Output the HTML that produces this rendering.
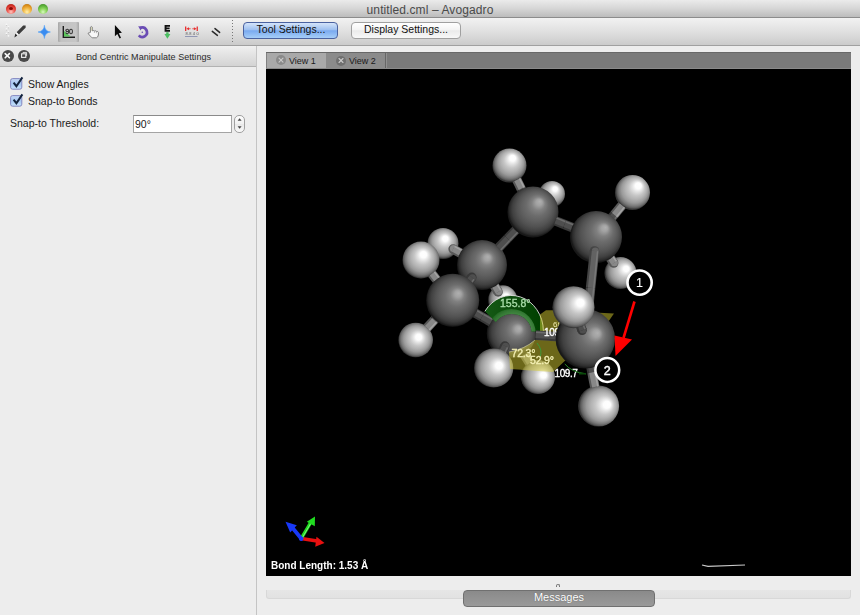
<!DOCTYPE html>
<html><head><meta charset="utf-8">
<style>
*{margin:0;padding:0;box-sizing:border-box}
html,body{width:860px;height:615px;overflow:hidden;background:#ededed;font-family:"Liberation Sans",sans-serif;position:relative}
.a{position:absolute}
#title{left:0;top:0;width:860px;height:17px;background:linear-gradient(#ebebeb,#d6d6d6 50%,#bcbcbc)}
#titleline{left:0;top:17px;width:860px;height:1px;background:#8c8c8c}
#tb{left:0;top:18px;width:860px;height:27px;background:linear-gradient(#f2f2f2,#dedede 55%,#cbcbcb)}
#tbline{left:0;top:45px;width:860px;height:1px;background:#a0a0a0}
.tl{width:10px;height:10px;border-radius:50%;top:4px}
#ttext{left:0;top:3px;width:860px;text-align:center;font-size:12px;color:#4a4a4a;letter-spacing:0.1px;padding-left:0}
#dockh{left:0;top:46px;width:256px;height:20px;background:linear-gradient(#f0f0f0,#d3d3d3)}
#dockhline{left:0;top:66px;width:256px;height:1px;background:#b2b2b2}
#split{left:256px;top:46px;width:1px;height:569px;background:#c4c4c4}
#docktitle{left:0;top:51.5px;width:287px;text-align:center;font-size:9px;color:#2a2a2a;letter-spacing:0.05px}
.lbl{font-size:10.5px;color:#1a1a1a;white-space:nowrap}
#tabbar{left:266px;top:52px;width:585px;height:17px;background:#7a7a7a;border-top:1px solid #686868;border-bottom:1px solid #8a8a8a}
#gl{left:266px;top:69px;width:585px;height:507px;background:#000;overflow:hidden}
.btn{height:17px;border-radius:4px;font-size:10.5px;text-align:center;line-height:13px;color:#111;white-space:nowrap}
.tab{top:52px;height:16px;font-size:9px;color:#1a1a1a;white-space:nowrap}
.dk{width:12px;height:12px;border-radius:50%;background:#4a4a4a;top:50px}
</style></head><body>
<div class="a" id="title"></div>
<div class="a" id="titleline"></div>
<div class="a tl" style="left:6px;background:radial-gradient(circle at 50% 80%,#ffc8c0 0,#f06058 35%,#d8342a 65%,#9a1c14 100%)"></div>
<div class="a tl" style="left:22px;background:radial-gradient(circle at 50% 80%,#fff0b0 0,#f4c050 35%,#e09420 65%,#a86a10 100%)"></div>
<div class="a tl" style="left:38px;background:radial-gradient(circle at 50% 80%,#d8f8c0 0,#90d860 35%,#5cb23a 65%,#3a7a22 100%)"></div>
<div class="a" style="left:9px;top:7px;width:4px;height:3px;border-radius:50%;background:#8a0a06"></div>
<div class="a" id="ttext">untitled.cml – Avogadro</div>
<div class="a" id="tb"></div>
<div class="a" id="tbline"></div>
<div class="a" style="left:58px;top:22px;width:21px;height:20px;background:linear-gradient(90deg,#a6a6a6,#c2c2c2 14%,#c6c6c6 86%,#a6a6a6);border-radius:1px"></div>
<svg class="a" style="left:0;top:18px;will-change:transform" width="240" height="27" viewBox="0 18 240 27">
<g fill="#fafafa" opacity="0.9"><circle cx="6.5" cy="24.5" r="0.9"/><circle cx="8.5" cy="26.8" r="0.9"/><circle cx="6.5" cy="29" r="0.9"/><circle cx="8.5" cy="31.3" r="0.9"/><circle cx="6.5" cy="33.5" r="0.9"/><circle cx="8.5" cy="35.8" r="0.9"/></g>
<g fill="#b8b8b8" opacity="0.7"><circle cx="6.5" cy="25.5" r="0.6"/><circle cx="8.5" cy="27.8" r="0.6"/><circle cx="6.5" cy="30" r="0.6"/><circle cx="8.5" cy="32.3" r="0.6"/><circle cx="6.5" cy="34.5" r="0.6"/></g>
<path d="M25.6,25.6 L23.2,25.4 L16.6,32.2 L18.8,34.4 L25.6,27.8 Z" fill="#3c3c3c"/>
<path d="M16.6,32.2 L18.8,34.4 L17.4,35.6 L15.4,33.6 Z" fill="#f4f4f4"/>
<path d="M15.4,33.6 L17.4,35.6 L14.4,37.6 Z" fill="#2a2a2a"/>
<path d="M44.4,25.3 Q44.9,31.4 50.4,32 Q44.9,32.6 44.4,38.5 Q43.9,32.6 38,32 Q43.9,31.4 44.4,25.3 Z" fill="#3a8cf0" stroke="#5aa6f6" stroke-width="0.6"/>
<path d="M63.3,26 L63.3,37.2 L75,37.2" fill="none" stroke="#1e1e1e" stroke-width="1.4"/>
<path d="M64,31 L64,36.5 L70.8,36.5 Z" fill="#5cc65c"/>
<text x="65.3" y="33.9" font-size="7.2" fill="#2a2a2a" stroke="#2a2a2a" stroke-width="0.3" font-family="Liberation Sans" letter-spacing="-0.4">90</text>
<path d="M90.4,32.4 L90.4,27.2 Q91.3,25.8 92.3,27.2 L92.3,30.8 Q93.4,30.1 94.4,31 Q95.5,30.4 96.4,31.4 Q97.7,31 98.4,32.3 L98.4,35 Q97.9,37.5 96.4,37.8 L92.6,37.8 Q91.4,37.6 90.6,36.4 L88.3,33.8 Q87.9,32.6 89.2,32.8 Z" fill="#f8f8f8" stroke="#707070" stroke-width="0.85"/><path d="M94.4,31.2 V33 M96.4,31.6 V33.2" stroke="#909090" stroke-width="0.6"/><path d="M91.6,27 L91.6,30.8" stroke="#c8c890" stroke-width="0.6"/>
<path d="M114.9,25.1 L114.9,36.2 L117.3,33.9 L119.6,38.5 L121,37.8 L118.8,33.2 L121.9,32.7 Z" fill="#0a0a0a"/>
<path d="M140.6,27.8 A4.7,4.7 0 1 1 138.8,35.4" fill="none" stroke="#6a4cb4" stroke-width="2.7"/>
<path d="M138.2,26.2 L142.6,26.4 L140.6,30.4 Z" fill="#6a4cb4"/>
<circle cx="142.3" cy="32.3" r="0.8" fill="#6a4cb4"/>
<path d="M164.6,25 H170 V26.7 H166.5 V27.6 H169.6 V29.2 H166.5 V30.1 H170 V31.8 H164.6 Z" fill="#111"/>
<path d="M166.2,32.2 H168.6 V34 H170.4 L167.4,38.7 L164.4,34 H166.2 Z" fill="#4cbe62"/>
<g fill="#e83030"><rect x="185" y="26.5" width="1.3" height="4.5"/><rect x="196.6" y="26.5" width="1.3" height="4.5"/><path d="M186.3,28.8 L189,27.3 L189,30.3 Z"/><path d="M196.6,28.8 L193.9,27.3 L193.9,30.3 Z"/><rect x="189" y="28.4" width="1.6" height="0.8"/><rect x="192.3" y="28.4" width="1.6" height="0.8"/></g>
<text x="185.4" y="35.2" font-size="4" fill="#555" font-family="Liberation Sans" letter-spacing="0.2">8.8 4 0</text>
<rect x="185" y="36" width="12.5" height="0.9" fill="#8a90b0"/>
<g stroke="#2a2a2a" stroke-width="1.5" stroke-linecap="round"><line x1="212.3" y1="31.4" x2="217.4" y2="35.4"/><line x1="215" y1="28.6" x2="219.6" y2="32.4"/></g>
<g fill="#777"><rect x="232" y="20" width="1" height="1"/><rect x="232" y="23" width="1" height="1"/><rect x="232" y="26" width="1" height="1"/><rect x="232" y="29" width="1" height="1"/><rect x="232" y="32" width="1" height="1"/><rect x="232" y="35" width="1" height="1"/><rect x="232" y="38" width="1" height="1"/><rect x="232" y="41" width="1" height="1"/></g>
</svg>

<div class="a btn" style="left:243px;top:22px;width:95px;border:1px solid #4a62a0;background:linear-gradient(#d4e4fa,#9ec0f0 45%,#7aaaf0 52%,#a6cef8);padding-left:1px">Tool Settings...</div>
<div class="a btn" style="left:351px;top:22px;width:110px;border:1px solid #a0a0a0;background:linear-gradient(#ffffff,#f4f4f4 45%,#ebebeb 52%,#f8f8f8)">Display Settings...</div>

<div class="a" id="dockh"></div>
<div class="a" id="dockhline"></div>
<div class="a" id="split"></div>
<div class="a dk" style="left:1.5px"></div>
<div class="a dk" style="left:18px"></div>
<svg class="a" style="left:0;top:46px" width="40" height="20" viewBox="0 46 40 20">
<g stroke="#fafafa" stroke-width="1.6" stroke-linecap="round"><line x1="5.2" y1="53.6" x2="9.4" y2="57.8"/><line x1="9.4" y1="53.6" x2="5.2" y2="57.8"/></g>
<rect x="21.6" y="53.8" width="4.2" height="3.6" fill="none" stroke="#f0f0f0" stroke-width="1.1"/><path d="M23,53.4 L23,52.4 L26.6,52.4 L26.6,55.6 L26,55.6" fill="none" stroke="#f0f0f0" stroke-width="0.9"/>
</svg>
<div class="a" id="docktitle">Bond Centric Manipulate Settings</div>

<svg class="a" style="left:8px;top:75px" width="18" height="36" viewBox="8 75 18 36">
<defs><linearGradient id="cbg" x1="0" y1="0" x2="0" y2="1"><stop offset="0" stop-color="#c4d6f4"/><stop offset="0.5" stop-color="#a6c8f2"/><stop offset="1" stop-color="#c8e4fc"/></linearGradient></defs>
<rect x="10.6" y="78.6" width="11.2" height="10.6" rx="2" fill="url(#cbg)" stroke="#8488c0" stroke-width="1"/>
<rect x="10.6" y="95.6" width="11.2" height="10.6" rx="2" fill="url(#cbg)" stroke="#8488c0" stroke-width="1"/>
<path d="M13.6,82.6 L16.4,86.2 L22.4,77.4" fill="none" stroke="#14243e" stroke-width="2"/>
<path d="M13.6,99.6 L16.4,103.2 L22.4,94.4" fill="none" stroke="#14243e" stroke-width="2"/>
</svg>
<div class="a lbl" style="left:28px;top:78px">Show Angles</div>
<div class="a lbl" style="left:28px;top:94.5px">Snap-to Bonds</div>
<div class="a lbl" style="left:10px;top:117px">Snap-to Threshold:</div>
<div class="a" style="left:133px;top:115px;width:99px;height:18px;background:#fff;border:1px solid #a4a4a4;border-top-color:#8a8a8a"></div>
<div class="a lbl" style="left:135px;top:118px">90°</div>
<div class="a" style="left:234px;top:115px;width:11px;height:18px;border:1px solid #a0a0a0;border-radius:5px;background:linear-gradient(#fdfdfd,#f0f0f0 50%,#e8e8e8 51%,#fafafa)"></div>
<svg class="a" style="left:234px;top:115px" width="11" height="18" viewBox="234 115 11 18">
<path d="M237.6,120.8 L239.6,118.2 L241.6,120.8 Z" fill="#454545"/><path d="M237.6,126.2 L239.6,128.8 L241.6,126.2 Z" fill="#454545"/>
</svg>

<div class="a" id="tabbar"></div>
<div class="a" style="left:266px;top:53px;width:60px;height:15px;background:#a9a9a9;border-left:1px solid #808080"></div>
<div class="a" style="left:326px;top:53px;width:60px;height:15px;background:#8b8b8b;border-right:1px solid #666"></div>
<div class="a" style="left:386px;top:53px;width:1px;height:15px;background:#909090"></div>
<div class="a" style="left:276px;top:55.2px;width:10px;height:10px;border-radius:50%;background:#8a8a8a"></div>
<div class="a" style="left:336px;top:55.5px;width:10px;height:10px;border-radius:50%;background:#707070"></div>
<svg class="a" style="left:266px;top:52px" width="120" height="16" viewBox="266 52 120 16">
<g stroke="#cacaca" stroke-width="1.1" stroke-linecap="round"><line x1="279" y1="58.2" x2="283" y2="62.2"/><line x1="283" y1="58.2" x2="279" y2="62.2"/><line x1="339" y1="58.5" x2="343" y2="62.5"/><line x1="343" y1="58.5" x2="339" y2="62.5"/></g>
</svg>
<div class="a tab" style="left:289px;top:56px">View 1</div>
<div class="a tab" style="left:349px;top:56px">View 2</div>
<div class="a" id="gl"></div>
<!--MOL-->
<svg class="a" style="left:266px;top:69px;will-change:transform" width="585" height="507" viewBox="266 69 585 507">
<defs><radialGradient id="gCt" gradientUnits="userSpaceOnUse" cx="534.0" cy="210.4" r="26.0" fx="539.9" fy="201.3"><stop offset="0" stop-color="#b0b0b0"/><stop offset="0.12" stop-color="#a2a2a2"/><stop offset="0.26" stop-color="#808080"/><stop offset="0.42" stop-color="#6c6c6c"/><stop offset="0.57" stop-color="#606060"/><stop offset="0.72" stop-color="#525252"/><stop offset="0.86" stop-color="#404040"/><stop offset="0.95" stop-color="#2c2c2c"/><stop offset="1" stop-color="#181818"/></radialGradient><radialGradient id="gCr" gradientUnits="userSpaceOnUse" cx="597.4" cy="235.5" r="26.5" fx="605.6" fy="227.3"><stop offset="0" stop-color="#b0b0b0"/><stop offset="0.12" stop-color="#a2a2a2"/><stop offset="0.26" stop-color="#808080"/><stop offset="0.42" stop-color="#6c6c6c"/><stop offset="0.57" stop-color="#606060"/><stop offset="0.72" stop-color="#525252"/><stop offset="0.86" stop-color="#404040"/><stop offset="0.95" stop-color="#2c2c2c"/><stop offset="1" stop-color="#181818"/></radialGradient><radialGradient id="gCm" gradientUnits="userSpaceOnUse" cx="482.9" cy="263.8" r="25.5" fx="488.0" fy="256.8"><stop offset="0" stop-color="#b0b0b0"/><stop offset="0.12" stop-color="#a2a2a2"/><stop offset="0.26" stop-color="#808080"/><stop offset="0.42" stop-color="#6c6c6c"/><stop offset="0.57" stop-color="#606060"/><stop offset="0.72" stop-color="#525252"/><stop offset="0.86" stop-color="#404040"/><stop offset="0.95" stop-color="#2c2c2c"/><stop offset="1" stop-color="#181818"/></radialGradient><radialGradient id="gCl" gradientUnits="userSpaceOnUse" cx="453.6" cy="299.2" r="27.0" fx="458.7" fy="293.2"><stop offset="0" stop-color="#b0b0b0"/><stop offset="0.12" stop-color="#a2a2a2"/><stop offset="0.26" stop-color="#808080"/><stop offset="0.42" stop-color="#6c6c6c"/><stop offset="0.57" stop-color="#606060"/><stop offset="0.72" stop-color="#525252"/><stop offset="0.86" stop-color="#404040"/><stop offset="0.95" stop-color="#2c2c2c"/><stop offset="1" stop-color="#181818"/></radialGradient><radialGradient id="gCc" gradientUnits="userSpaceOnUse" cx="512.5" cy="332.7" r="25.0" fx="519.2" fy="328.5"><stop offset="0" stop-color="#b0b0b0"/><stop offset="0.12" stop-color="#a2a2a2"/><stop offset="0.26" stop-color="#808080"/><stop offset="0.42" stop-color="#6c6c6c"/><stop offset="0.57" stop-color="#606060"/><stop offset="0.72" stop-color="#525252"/><stop offset="0.86" stop-color="#404040"/><stop offset="0.95" stop-color="#2c2c2c"/><stop offset="1" stop-color="#181818"/></radialGradient><radialGradient id="gCrl" gradientUnits="userSpaceOnUse" cx="587.2" cy="337.8" r="30.3" fx="597.8" fy="333.0"><stop offset="0" stop-color="#b0b0b0"/><stop offset="0.12" stop-color="#a2a2a2"/><stop offset="0.26" stop-color="#808080"/><stop offset="0.42" stop-color="#6c6c6c"/><stop offset="0.57" stop-color="#606060"/><stop offset="0.72" stop-color="#525252"/><stop offset="0.86" stop-color="#404040"/><stop offset="0.95" stop-color="#2c2c2c"/><stop offset="1" stop-color="#181818"/></radialGradient><radialGradient id="gHt" gradientUnits="userSpaceOnUse" cx="510.0" cy="164.2" r="17.3" fx="513.1" fy="156.9"><stop offset="0" stop-color="#ffffff"/><stop offset="0.17" stop-color="#fdfdfd"/><stop offset="0.3" stop-color="#e2e2e2"/><stop offset="0.45" stop-color="#c6c6c6"/><stop offset="0.6" stop-color="#b2b2b2"/><stop offset="0.75" stop-color="#9a9a9a"/><stop offset="0.87" stop-color="#7a7a7a"/><stop offset="0.95" stop-color="#5a5a5a"/><stop offset="1" stop-color="#363636"/></radialGradient><radialGradient id="gHbt" gradientUnits="userSpaceOnUse" cx="552.6" cy="193.1" r="13.3" fx="555.7" fy="188.1"><stop offset="0" stop-color="#ffffff"/><stop offset="0.17" stop-color="#fdfdfd"/><stop offset="0.3" stop-color="#e2e2e2"/><stop offset="0.45" stop-color="#c6c6c6"/><stop offset="0.6" stop-color="#b2b2b2"/><stop offset="0.75" stop-color="#9a9a9a"/><stop offset="0.87" stop-color="#7a7a7a"/><stop offset="0.95" stop-color="#5a5a5a"/><stop offset="1" stop-color="#363636"/></radialGradient><radialGradient id="gHtr" gradientUnits="userSpaceOnUse" cx="633.5" cy="191.3" r="17.9" fx="639.3" fy="184.6"><stop offset="0" stop-color="#ffffff"/><stop offset="0.17" stop-color="#fdfdfd"/><stop offset="0.3" stop-color="#e2e2e2"/><stop offset="0.45" stop-color="#c6c6c6"/><stop offset="0.6" stop-color="#b2b2b2"/><stop offset="0.75" stop-color="#9a9a9a"/><stop offset="0.87" stop-color="#7a7a7a"/><stop offset="0.95" stop-color="#5a5a5a"/><stop offset="1" stop-color="#363636"/></radialGradient><radialGradient id="gHrb" gradientUnits="userSpaceOnUse" cx="621.5" cy="272.3" r="16.3" fx="627.3" fy="268.1"><stop offset="0" stop-color="#ffffff"/><stop offset="0.17" stop-color="#fdfdfd"/><stop offset="0.3" stop-color="#e2e2e2"/><stop offset="0.45" stop-color="#c6c6c6"/><stop offset="0.6" stop-color="#b2b2b2"/><stop offset="0.75" stop-color="#9a9a9a"/><stop offset="0.87" stop-color="#7a7a7a"/><stop offset="0.95" stop-color="#5a5a5a"/><stop offset="1" stop-color="#363636"/></radialGradient><radialGradient id="gHlb" gradientUnits="userSpaceOnUse" cx="443.4" cy="242.6" r="15.8" fx="445.7" fy="237.8"><stop offset="0" stop-color="#ffffff"/><stop offset="0.17" stop-color="#fdfdfd"/><stop offset="0.3" stop-color="#e2e2e2"/><stop offset="0.45" stop-color="#c6c6c6"/><stop offset="0.6" stop-color="#b2b2b2"/><stop offset="0.75" stop-color="#9a9a9a"/><stop offset="0.87" stop-color="#7a7a7a"/><stop offset="0.95" stop-color="#5a5a5a"/><stop offset="1" stop-color="#363636"/></radialGradient><radialGradient id="gHbc" gradientUnits="userSpaceOnUse" cx="503.3" cy="299.1" r="14.8" fx="506.9" fy="295.8"><stop offset="0" stop-color="#ffffff"/><stop offset="0.17" stop-color="#fdfdfd"/><stop offset="0.3" stop-color="#e2e2e2"/><stop offset="0.45" stop-color="#c6c6c6"/><stop offset="0.6" stop-color="#b2b2b2"/><stop offset="0.75" stop-color="#9a9a9a"/><stop offset="0.87" stop-color="#7a7a7a"/><stop offset="0.95" stop-color="#5a5a5a"/><stop offset="1" stop-color="#363636"/></radialGradient><radialGradient id="gHl" gradientUnits="userSpaceOnUse" cx="421.4" cy="259.1" r="18.9" fx="423.9" fy="253.7"><stop offset="0" stop-color="#ffffff"/><stop offset="0.17" stop-color="#fdfdfd"/><stop offset="0.3" stop-color="#e2e2e2"/><stop offset="0.45" stop-color="#c6c6c6"/><stop offset="0.6" stop-color="#b2b2b2"/><stop offset="0.75" stop-color="#9a9a9a"/><stop offset="0.87" stop-color="#7a7a7a"/><stop offset="0.95" stop-color="#5a5a5a"/><stop offset="1" stop-color="#363636"/></radialGradient><radialGradient id="gHll" gradientUnits="userSpaceOnUse" cx="416.2" cy="339.5" r="17.6" fx="419.2" fy="336.6"><stop offset="0" stop-color="#ffffff"/><stop offset="0.17" stop-color="#fdfdfd"/><stop offset="0.3" stop-color="#e2e2e2"/><stop offset="0.45" stop-color="#c6c6c6"/><stop offset="0.6" stop-color="#b2b2b2"/><stop offset="0.75" stop-color="#9a9a9a"/><stop offset="0.87" stop-color="#7a7a7a"/><stop offset="0.95" stop-color="#5a5a5a"/><stop offset="1" stop-color="#363636"/></radialGradient><radialGradient id="gHbl" gradientUnits="userSpaceOnUse" cx="494.6" cy="367.6" r="20.0" fx="500.0" fy="365.2"><stop offset="0" stop-color="#ffffff"/><stop offset="0.17" stop-color="#fdfdfd"/><stop offset="0.3" stop-color="#e2e2e2"/><stop offset="0.45" stop-color="#c6c6c6"/><stop offset="0.6" stop-color="#b2b2b2"/><stop offset="0.75" stop-color="#9a9a9a"/><stop offset="0.87" stop-color="#7a7a7a"/><stop offset="0.95" stop-color="#5a5a5a"/><stop offset="1" stop-color="#363636"/></radialGradient><radialGradient id="gHb" gradientUnits="userSpaceOnUse" cx="539.0" cy="376.7" r="17.3" fx="544.5" fy="374.8"><stop offset="0" stop-color="#ffffff"/><stop offset="0.17" stop-color="#fdfdfd"/><stop offset="0.3" stop-color="#e2e2e2"/><stop offset="0.45" stop-color="#c6c6c6"/><stop offset="0.6" stop-color="#b2b2b2"/><stop offset="0.75" stop-color="#9a9a9a"/><stop offset="0.87" stop-color="#7a7a7a"/><stop offset="0.95" stop-color="#5a5a5a"/><stop offset="1" stop-color="#363636"/></radialGradient><radialGradient id="gHf" gradientUnits="userSpaceOnUse" cx="574.7" cy="306.4" r="21.4" fx="581.6" fy="302.0"><stop offset="0" stop-color="#ffffff"/><stop offset="0.17" stop-color="#fdfdfd"/><stop offset="0.3" stop-color="#e2e2e2"/><stop offset="0.45" stop-color="#c6c6c6"/><stop offset="0.6" stop-color="#b2b2b2"/><stop offset="0.75" stop-color="#9a9a9a"/><stop offset="0.87" stop-color="#7a7a7a"/><stop offset="0.95" stop-color="#5a5a5a"/><stop offset="1" stop-color="#363636"/></radialGradient><radialGradient id="gHbr" gradientUnits="userSpaceOnUse" cx="600.1" cy="405.8" r="20.9" fx="608.4" fy="404.5"><stop offset="0" stop-color="#ffffff"/><stop offset="0.17" stop-color="#fdfdfd"/><stop offset="0.3" stop-color="#e2e2e2"/><stop offset="0.45" stop-color="#c6c6c6"/><stop offset="0.6" stop-color="#b2b2b2"/><stop offset="0.75" stop-color="#9a9a9a"/><stop offset="0.87" stop-color="#7a7a7a"/><stop offset="0.95" stop-color="#5a5a5a"/><stop offset="1" stop-color="#363636"/></radialGradient>
<clipPath id="ringclip"><path d="M484.9,311.3 A32,36 0 0 1 543.4,330.9 L531.5,331.5 A19.5,18 0 0 0 495.8,321.9 Z"/></clipPath>
<linearGradient id="gring" x1="0" y1="0" x2="1" y2="0"><stop offset="0" stop-color="#155a15"/><stop offset="0.5" stop-color="#0b4a0b"/><stop offset="1" stop-color="#004000"/></linearGradient>
<clipPath id="ccclip"><circle cx="511.3" cy="333.5" r="24.5"/></clipPath>
</defs>
<circle cx="552" cy="194" r="13" fill="url(#gHbt)"/>
<circle cx="502.7" cy="299.7" r="14.5" fill="url(#gHbc)"/>
<circle cx="542.3" cy="203.2" r="4.75" fill="#383838"/>
<circle cx="541.7" cy="202.7" r="3.52" fill="#4e4e4e"/>
<line x1="542.3" y1="203.2" x2="542.5" y2="203.0" stroke="#383838" stroke-width="9.5"/>
<line x1="541.7" y1="202.7" x2="542.0" y2="202.4" stroke="#4e4e4e" stroke-width="7.0"/>
<line x1="540.2" y1="201.0" x2="540.4" y2="200.8" stroke="#6c6c6c" stroke-width="1.5"/>
<line x1="543.0" y1="202.5" x2="542.5" y2="203.0" stroke="#585858" stroke-width="9.5"/>
<line x1="542.5" y1="201.9" x2="542.0" y2="202.4" stroke="#888888" stroke-width="7.0"/>
<line x1="540.9" y1="200.3" x2="540.4" y2="200.8" stroke="#a4a4a4" stroke-width="1.5"/>
<circle cx="443" cy="243.5" r="15.5" fill="url(#gHlb)"/>
<circle cx="620.5" cy="273" r="16" fill="url(#gHrb)"/>
<circle cx="488.4" cy="275.7" r="4.75" fill="#383838"/>
<circle cx="489.1" cy="275.3" r="3.52" fill="#4e4e4e"/>
<line x1="488.4" y1="275.7" x2="492.4" y2="282.4" stroke="#383838" stroke-width="9.5"/>
<line x1="489.1" y1="275.3" x2="493.0" y2="282.0" stroke="#4e4e4e" stroke-width="7.0"/>
<line x1="491.0" y1="274.2" x2="495.0" y2="280.8" stroke="#6c6c6c" stroke-width="1.5"/>
<circle cx="498.1" cy="292.0" r="4.75" fill="#585858"/>
<circle cx="498.7" cy="291.6" r="3.52" fill="#888888"/>
<line x1="498.1" y1="292.0" x2="492.4" y2="282.4" stroke="#585858" stroke-width="9.5"/>
<line x1="498.7" y1="291.6" x2="493.0" y2="282.0" stroke="#888888" stroke-width="7.0"/>
<line x1="500.7" y1="290.4" x2="495.0" y2="280.8" stroke="#a4a4a4" stroke-width="1.5"/>
<circle cx="471.1" cy="259.0" r="4.75" fill="#383838"/>
<circle cx="471.4" cy="258.3" r="3.52" fill="#4e4e4e"/>
<line x1="471.1" y1="259.0" x2="462.5" y2="254.2" stroke="#383838" stroke-width="9.5"/>
<line x1="471.4" y1="258.3" x2="462.9" y2="253.6" stroke="#4e4e4e" stroke-width="7.0"/>
<line x1="472.5" y1="256.3" x2="464.0" y2="251.6" stroke="#6c6c6c" stroke-width="1.5"/>
<circle cx="453.1" cy="249.1" r="4.75" fill="#585858"/>
<circle cx="453.4" cy="248.4" r="3.52" fill="#888888"/>
<line x1="453.1" y1="249.1" x2="462.5" y2="254.2" stroke="#585858" stroke-width="9.5"/>
<line x1="453.4" y1="248.4" x2="462.9" y2="253.6" stroke="#888888" stroke-width="7.0"/>
<line x1="454.5" y1="246.4" x2="464.0" y2="251.6" stroke="#a4a4a4" stroke-width="1.5"/>
<circle cx="509.5" cy="165.5" r="17" fill="url(#gHt)"/>
<circle cx="538" cy="377" r="17" fill="url(#gHb)"/>
<circle cx="517.7" cy="343.9" r="4.75" fill="#383838"/>
<circle cx="518.4" cy="343.5" r="3.52" fill="#4e4e4e"/>
<line x1="517.7" y1="343.9" x2="524.6" y2="355.2" stroke="#383838" stroke-width="9.5"/>
<line x1="518.4" y1="343.5" x2="525.3" y2="354.9" stroke="#4e4e4e" stroke-width="7.0"/>
<line x1="520.3" y1="342.3" x2="527.2" y2="353.7" stroke="#6c6c6c" stroke-width="1.5"/>
<line x1="529.6" y1="363.2" x2="524.6" y2="355.2" stroke="#585858" stroke-width="9.5"/>
<line x1="530.2" y1="362.8" x2="525.3" y2="354.9" stroke="#888888" stroke-width="7.0"/>
<line x1="532.1" y1="361.6" x2="527.2" y2="353.7" stroke="#a4a4a4" stroke-width="1.5"/>
<circle cx="603.3" cy="247.7" r="4.75" fill="#383838"/>
<circle cx="603.9" cy="247.3" r="3.52" fill="#4e4e4e"/>
<line x1="603.3" y1="247.7" x2="608.2" y2="255.0" stroke="#383838" stroke-width="9.5"/>
<line x1="603.9" y1="247.3" x2="608.9" y2="254.6" stroke="#4e4e4e" stroke-width="7.0"/>
<line x1="605.8" y1="246.0" x2="610.8" y2="253.3" stroke="#6c6c6c" stroke-width="1.5"/>
<circle cx="613.7" cy="263.1" r="4.75" fill="#585858"/>
<circle cx="614.4" cy="262.7" r="3.52" fill="#888888"/>
<line x1="613.7" y1="263.1" x2="608.2" y2="255.0" stroke="#585858" stroke-width="9.5"/>
<line x1="614.4" y1="262.7" x2="608.9" y2="254.6" stroke="#888888" stroke-width="7.0"/>
<line x1="616.3" y1="261.4" x2="610.8" y2="253.3" stroke="#a4a4a4" stroke-width="1.5"/>
<circle cx="511.3" cy="333.5" r="24.5" fill="url(#gCc)"/>
<circle cx="415.7" cy="340" r="17.3" fill="url(#gHll)"/>
<circle cx="527.2" cy="200.6" r="4.75" fill="#383838"/>
<circle cx="527.9" cy="200.3" r="3.52" fill="#4e4e4e"/>
<line x1="527.2" y1="200.6" x2="521.2" y2="188.8" stroke="#383838" stroke-width="9.5"/>
<line x1="527.9" y1="200.3" x2="521.9" y2="188.4" stroke="#4e4e4e" stroke-width="7.0"/>
<line x1="530.0" y1="199.2" x2="524.0" y2="187.4" stroke="#6c6c6c" stroke-width="1.5"/>
<line x1="516.8" y1="179.9" x2="521.2" y2="188.8" stroke="#585858" stroke-width="9.5"/>
<line x1="517.5" y1="179.6" x2="521.9" y2="188.4" stroke="#888888" stroke-width="7.0"/>
<line x1="519.5" y1="178.5" x2="524.0" y2="187.4" stroke="#a4a4a4" stroke-width="1.5"/>
<circle cx="632.5" cy="192.5" r="17.5" fill="url(#gHtr)"/>
<circle cx="482" cy="265" r="25" fill="url(#gCm)"/>
<circle cx="524.2" cy="221.2" r="4.75" fill="#383838"/>
<circle cx="524.7" cy="221.7" r="3.52" fill="#4e4e4e"/>
<line x1="524.2" y1="221.2" x2="507.5" y2="238.5" stroke="#383838" stroke-width="9.5"/>
<line x1="524.7" y1="221.7" x2="508.0" y2="239.0" stroke="#4e4e4e" stroke-width="7.0"/>
<line x1="526.3" y1="223.3" x2="509.7" y2="240.6" stroke="#6c6c6c" stroke-width="1.5"/>
<line x1="498.5" y1="247.9" x2="507.5" y2="238.5" stroke="#383838" stroke-width="9.5"/>
<line x1="499.0" y1="248.4" x2="508.0" y2="239.0" stroke="#4e4e4e" stroke-width="7.0"/>
<line x1="500.7" y1="250.0" x2="509.7" y2="240.6" stroke="#6c6c6c" stroke-width="1.5"/>
<circle cx="604.2" cy="226.9" r="4.75" fill="#383838"/>
<circle cx="604.8" cy="227.4" r="3.52" fill="#4e4e4e"/>
<line x1="604.2" y1="226.9" x2="614.2" y2="214.8" stroke="#383838" stroke-width="9.5"/>
<line x1="604.8" y1="227.4" x2="614.8" y2="215.2" stroke="#4e4e4e" stroke-width="7.0"/>
<line x1="606.6" y1="228.9" x2="616.6" y2="216.7" stroke="#6c6c6c" stroke-width="1.5"/>
<line x1="622.0" y1="205.4" x2="614.2" y2="214.8" stroke="#585858" stroke-width="9.5"/>
<line x1="622.5" y1="205.8" x2="614.8" y2="215.2" stroke="#888888" stroke-width="7.0"/>
<line x1="624.3" y1="207.3" x2="616.6" y2="216.7" stroke="#a4a4a4" stroke-width="1.5"/>
<circle cx="464.2" cy="306.8" r="4.75" fill="#383838"/>
<circle cx="464.6" cy="306.2" r="3.52" fill="#4e4e4e"/>
<line x1="464.2" y1="306.8" x2="482.0" y2="316.9" stroke="#383838" stroke-width="9.5"/>
<line x1="464.6" y1="306.2" x2="482.4" y2="316.2" stroke="#4e4e4e" stroke-width="7.0"/>
<line x1="465.7" y1="304.2" x2="483.5" y2="314.3" stroke="#6c6c6c" stroke-width="1.5"/>
<line x1="491.0" y1="322.0" x2="482.0" y2="316.9" stroke="#383838" stroke-width="9.5"/>
<line x1="491.4" y1="321.4" x2="482.4" y2="316.2" stroke="#4e4e4e" stroke-width="7.0"/>
<line x1="492.5" y1="319.4" x2="483.5" y2="314.3" stroke="#6c6c6c" stroke-width="1.5"/>
<circle cx="443.7" cy="310.0" r="4.75" fill="#383838"/>
<circle cx="444.2" cy="310.5" r="3.52" fill="#4e4e4e"/>
<line x1="443.7" y1="310.0" x2="434.2" y2="320.1" stroke="#383838" stroke-width="9.5"/>
<line x1="444.2" y1="310.5" x2="434.8" y2="320.7" stroke="#4e4e4e" stroke-width="7.0"/>
<line x1="445.9" y1="312.1" x2="436.4" y2="322.2" stroke="#6c6c6c" stroke-width="1.5"/>
<line x1="426.9" y1="328.0" x2="434.2" y2="320.1" stroke="#585858" stroke-width="9.5"/>
<line x1="427.5" y1="328.5" x2="434.8" y2="320.7" stroke="#888888" stroke-width="7.0"/>
<line x1="429.1" y1="330.0" x2="436.4" y2="322.2" stroke="#a4a4a4" stroke-width="1.5"/>
<circle cx="533" cy="212" r="25.5" fill="url(#gCt)"/>
<line x1="555.5" y1="220.9" x2="564.5" y2="224.5" stroke="#383838" stroke-width="9.5"/>
<line x1="555.8" y1="220.2" x2="564.8" y2="223.8" stroke="#4e4e4e" stroke-width="7.0"/>
<line x1="556.6" y1="218.1" x2="565.6" y2="221.7" stroke="#6c6c6c" stroke-width="1.5"/>
<circle cx="583.9" cy="232.2" r="4.75" fill="#383838"/>
<circle cx="584.2" cy="231.5" r="3.52" fill="#4e4e4e"/>
<line x1="583.9" y1="232.2" x2="564.5" y2="224.5" stroke="#383838" stroke-width="9.5"/>
<line x1="584.2" y1="231.5" x2="564.8" y2="223.8" stroke="#4e4e4e" stroke-width="7.0"/>
<line x1="585.0" y1="229.4" x2="565.6" y2="221.7" stroke="#6c6c6c" stroke-width="1.5"/>
<circle cx="471.8" cy="277.3" r="4.75" fill="#383838"/>
<circle cx="472.4" cy="277.8" r="3.52" fill="#4e4e4e"/>
<line x1="471.8" y1="277.3" x2="467.4" y2="282.6" stroke="#383838" stroke-width="9.5"/>
<line x1="472.4" y1="277.8" x2="467.9" y2="283.1" stroke="#4e4e4e" stroke-width="7.0"/>
<line x1="474.1" y1="279.3" x2="469.7" y2="284.6" stroke="#6c6c6c" stroke-width="1.5"/>
<circle cx="461.2" cy="290.1" r="4.75" fill="#383838"/>
<circle cx="461.7" cy="290.6" r="3.52" fill="#4e4e4e"/>
<line x1="461.2" y1="290.1" x2="467.4" y2="282.6" stroke="#383838" stroke-width="9.5"/>
<line x1="461.7" y1="290.6" x2="467.9" y2="283.1" stroke="#4e4e4e" stroke-width="7.0"/>
<line x1="463.5" y1="292.0" x2="469.7" y2="284.6" stroke="#6c6c6c" stroke-width="1.5"/>
<circle cx="596" cy="237" r="26" fill="url(#gCr)"/>
<circle cx="504.9" cy="346.0" r="4.75" fill="#383838"/>
<circle cx="505.6" cy="346.3" r="3.52" fill="#4e4e4e"/>
<line x1="504.9" y1="346.0" x2="502.5" y2="350.8" stroke="#383838" stroke-width="9.5"/>
<line x1="505.6" y1="346.3" x2="503.2" y2="351.1" stroke="#4e4e4e" stroke-width="7.0"/>
<line x1="507.6" y1="347.4" x2="505.2" y2="352.1" stroke="#6c6c6c" stroke-width="1.5"/>
<circle cx="498.2" cy="359.3" r="4.75" fill="#585858"/>
<circle cx="498.8" cy="359.6" r="3.52" fill="#888888"/>
<line x1="498.2" y1="359.3" x2="502.5" y2="350.8" stroke="#585858" stroke-width="9.5"/>
<line x1="498.8" y1="359.6" x2="503.2" y2="351.1" stroke="#888888" stroke-width="7.0"/>
<line x1="500.9" y1="360.7" x2="505.2" y2="352.1" stroke="#a4a4a4" stroke-width="1.5"/>
<circle cx="421" cy="260" r="18.5" fill="url(#gHl)"/>
<circle cx="444.5" cy="289.9" r="4.75" fill="#383838"/>
<circle cx="445.1" cy="289.4" r="3.52" fill="#4e4e4e"/>
<line x1="444.5" y1="289.9" x2="436.9" y2="280.1" stroke="#383838" stroke-width="9.5"/>
<line x1="445.1" y1="289.4" x2="437.4" y2="279.7" stroke="#4e4e4e" stroke-width="7.0"/>
<line x1="446.9" y1="288.0" x2="439.2" y2="278.3" stroke="#6c6c6c" stroke-width="1.5"/>
<line x1="431.9" y1="273.8" x2="436.9" y2="280.1" stroke="#585858" stroke-width="9.5"/>
<line x1="432.5" y1="273.3" x2="437.4" y2="279.7" stroke="#888888" stroke-width="7.0"/>
<line x1="434.3" y1="271.9" x2="439.2" y2="278.3" stroke="#a4a4a4" stroke-width="1.5"/>
<circle cx="452.7" cy="300.3" r="26.5" fill="url(#gCl)"/>
<path d="M484.9,311.3 A32,36 0 0 1 543.4,330.9 L531.5,331.5 A19.5,18 0 0 0 495.8,321.9 Z" fill="url(#gring)"/>
<g clip-path="url(#ringclip)"><g clip-path="url(#ccclip)"><circle cx="511.3" cy="333.5" r="24.5" fill="url(#gCc)"/><rect x="480" y="290" width="70" height="50" fill="rgba(35,205,35,0.4)"/></g></g>
<path d="M484.9,311.3 A32,36 0 0 1 543.4,330.9" fill="none" stroke="#e0e0e0" stroke-width="0.9"/>
<text x="500" y="306.5" font-size="10.5" fill="#a8dca8" stroke="#a8dca8" stroke-width="0.35" font-family="Liberation Sans">155.8°</text>
<line x1="535.7" y1="335.2" x2="548.3" y2="336.1" stroke="#383838" stroke-width="9.5"/>
<line x1="535.8" y1="334.5" x2="548.4" y2="335.3" stroke="#4e4e4e" stroke-width="7.0"/>
<line x1="536.0" y1="332.2" x2="548.5" y2="333.1" stroke="#6c6c6c" stroke-width="1.5"/>
<circle cx="570.5" cy="337.7" r="4.75" fill="#383838"/>
<circle cx="570.5" cy="336.9" r="3.52" fill="#4e4e4e"/>
<line x1="570.5" y1="337.7" x2="548.3" y2="336.1" stroke="#383838" stroke-width="9.5"/>
<line x1="570.5" y1="336.9" x2="548.4" y2="335.3" stroke="#4e4e4e" stroke-width="7.0"/>
<line x1="570.7" y1="334.6" x2="548.5" y2="333.1" stroke="#6c6c6c" stroke-width="1.5"/>
<circle cx="493.7" cy="368" r="19.6" fill="url(#gHbl)"/>
<circle cx="594.5" cy="250.9" r="4.75" fill="#444444"/>
<circle cx="595.3" cy="251.0" r="3.52" fill="#626262"/>
<line x1="594.5" y1="250.9" x2="590.6" y2="287.9" stroke="#444444" stroke-width="9.5"/>
<line x1="595.3" y1="251.0" x2="591.4" y2="287.9" stroke="#626262" stroke-width="7.0"/>
<line x1="597.6" y1="251.2" x2="593.7" y2="288.2" stroke="#787878" stroke-width="1.5"/>
<circle cx="586.9" cy="323.9" r="4.75" fill="#444444"/>
<circle cx="587.6" cy="324.0" r="3.52" fill="#626262"/>
<line x1="586.9" y1="323.9" x2="590.6" y2="287.9" stroke="#444444" stroke-width="9.5"/>
<line x1="587.6" y1="324.0" x2="591.4" y2="287.9" stroke="#626262" stroke-width="7.0"/>
<line x1="589.9" y1="324.2" x2="593.7" y2="288.2" stroke="#787878" stroke-width="1.5"/>
<path d="M540,314.5 L546,310.2 L552,310.2 L614,313.5 L604,328 L540,333 Z" fill="rgba(215,205,50,0.5)"/>
<path d="M535,340 L556,340 L569,357 L553,372 L510,369 L509,352 Q525,349 535,340 Z" fill="rgba(215,205,50,0.5)"/>
<path d="M537,343 Q543,350 540,357" fill="none" stroke="#3a9a3a" stroke-width="1"/><path d="M535,340 Q525,349 509,352" fill="none" stroke="#f0f0d0" stroke-width="0.6" opacity="0.8"/>
<text x="511.5" y="357.3" font-size="10.5" fill="#f4f0b4" stroke="#f4f0b4" stroke-width="0.35" font-family="Liberation Sans" letter-spacing="-0.2">72.3°</text>
<text x="530" y="364.3" font-size="10.5" fill="#f4f0b4" stroke="#f4f0b4" stroke-width="0.35" font-family="Liberation Sans" letter-spacing="-0.2">52.9°</text>
<line x1="535.7" y1="335.2" x2="548.3" y2="336.1" stroke="#383838" stroke-width="9.5"/>
<line x1="535.8" y1="334.5" x2="548.4" y2="335.3" stroke="#4e4e4e" stroke-width="7.0"/>
<line x1="536.0" y1="332.2" x2="548.5" y2="333.1" stroke="#6c6c6c" stroke-width="1.5"/>
<circle cx="570.5" cy="337.7" r="4.75" fill="#383838"/>
<circle cx="570.5" cy="336.9" r="3.52" fill="#4e4e4e"/>
<line x1="570.5" y1="337.7" x2="548.3" y2="336.1" stroke="#383838" stroke-width="9.5"/>
<line x1="570.5" y1="336.9" x2="548.4" y2="335.3" stroke="#4e4e4e" stroke-width="7.0"/>
<line x1="570.7" y1="334.6" x2="548.5" y2="333.1" stroke="#6c6c6c" stroke-width="1.5"/>
<text x="544" y="336.2" font-size="10" fill="#ffffff" stroke="#ffffff" stroke-width="0.35" font-family="Liberation Sans" letter-spacing="-0.3">109.1°</text>
<text x="553" y="327" font-size="8" fill="#f2eeb0" font-family="Liberation Sans">68.3°</text>
<text x="554.5" y="377.2" font-size="10" fill="#ffffff" stroke="#ffffff" stroke-width="0.35" font-family="Liberation Sans" letter-spacing="-0.4">109.7</text>
<path d="M564.8,364 Q572,372.5 586,373.8" fill="none" stroke="#2a8a2a" stroke-width="1"/><path d="M579,373.6 L586,373.8" stroke="#0a4a0a" stroke-width="1.6"/>
<circle cx="598.6" cy="406" r="20.5" fill="url(#gHbr)"/>
<circle cx="588.2" cy="353.3" r="4.75" fill="#383838"/>
<circle cx="588.9" cy="353.1" r="3.52" fill="#4e4e4e"/>
<line x1="588.2" y1="353.3" x2="592.0" y2="372.4" stroke="#383838" stroke-width="9.5"/>
<line x1="588.9" y1="353.1" x2="592.7" y2="372.2" stroke="#4e4e4e" stroke-width="7.0"/>
<line x1="591.2" y1="352.7" x2="594.9" y2="371.8" stroke="#6c6c6c" stroke-width="1.5"/>
<line x1="594.8" y1="386.9" x2="592.0" y2="372.4" stroke="#585858" stroke-width="9.5"/>
<line x1="595.6" y1="386.7" x2="592.7" y2="372.2" stroke="#888888" stroke-width="7.0"/>
<line x1="597.8" y1="386.3" x2="594.9" y2="371.8" stroke="#a4a4a4" stroke-width="1.5"/>
<circle cx="585.3" cy="338.7" r="29.7" fill="url(#gCrl)"/>
<circle cx="582.1" cy="330.3" r="4.75" fill="#383838"/>
<circle cx="582.9" cy="330.0" r="3.52" fill="#4e4e4e"/>
<line x1="582.1" y1="330.3" x2="579.4" y2="322.9" stroke="#383838" stroke-width="9.5"/>
<line x1="582.9" y1="330.0" x2="580.1" y2="322.7" stroke="#4e4e4e" stroke-width="7.0"/>
<line x1="585.0" y1="329.2" x2="582.2" y2="321.9" stroke="#6c6c6c" stroke-width="1.5"/>
<circle cx="577.2" cy="317.0" r="4.75" fill="#585858"/>
<circle cx="577.9" cy="316.8" r="3.52" fill="#888888"/>
<line x1="577.2" y1="317.0" x2="579.4" y2="322.9" stroke="#585858" stroke-width="9.5"/>
<line x1="577.9" y1="316.8" x2="580.1" y2="322.7" stroke="#888888" stroke-width="7.0"/>
<line x1="580.0" y1="316.0" x2="582.2" y2="321.9" stroke="#a4a4a4" stroke-width="1.5"/>
<circle cx="573.5" cy="307.2" r="21" fill="url(#gHf)"/>
<line x1="634.5" y1="301.5" x2="623.5" y2="338" stroke="#ff0000" stroke-width="2.6"/>
<polygon points="614.5,335.5 632,339.5 615.5,356" fill="#ff0000"/>
<circle cx="639.6" cy="282.6" r="12.1" fill="#000" stroke="#fff" stroke-width="2.6"/>
<text x="639.6" y="287.4" font-size="12.5" fill="#fff" stroke="#fff" stroke-width="0.1" text-anchor="middle" font-family="Liberation Sans">1</text>
<circle cx="607.3" cy="370" r="11.9" fill="#000" stroke="#fff" stroke-width="2.5"/>
<text x="607.3" y="374.9" font-size="12.5" fill="#fff" stroke="#fff" stroke-width="0.4" text-anchor="middle" font-family="Liberation Sans">2</text>
<g stroke-linecap="round">
<line x1="301.2" y1="538.5" x2="317" y2="541" stroke="#e81010" stroke-width="3.6"/>
<polygon points="324.5,543 316.5,536.8 315.2,546.8" fill="#e81010"/>
<line x1="301.2" y1="538.5" x2="311" y2="522" stroke="#20dc20" stroke-width="3.4"/>
<line x1="302.4" y1="537.6" x2="310.6" y2="523.6" stroke="#7cf07c" stroke-width="1"/>
<polygon points="315,516.5 314.8,526.2 306.8,521.8" fill="#20dc20"/>
<line x1="301.2" y1="538.5" x2="291" y2="526" stroke="#1838f8" stroke-width="3.8"/>
<polygon points="285.5,521.8 296.8,525.2 290.2,532.4" fill="#1838f8"/>
<circle cx="301.2" cy="538.8" r="2.2" fill="#1838f8"/>
</g>
<text x="271" y="568.5" font-size="10" font-weight="bold" fill="#fff" font-family="Liberation Sans">Bond Length: 1.53 Å</text>
<polyline points="702,565 708,566.3 745,565" fill="none" stroke="#c8c8c8" stroke-width="1.2"/>
</svg>
<!--/MOL-->

<div class="a" style="left:266px;top:590px;width:585px;height:9px;background:linear-gradient(#e6e6e6,#e2e2e2);border:1px solid #d8d8d8;border-top:none;border-radius:0 0 3px 3px"></div>
<div class="a" style="left:556px;top:584px;width:4px;height:3px;border:1px solid #777;border-bottom:none;border-radius:2px 2px 0 0"></div>
<div class="a btn" style="left:463px;top:590px;width:192px;border:1px solid #707070;background:linear-gradient(#8a8a8a,#9a9a9a);color:#fff;text-shadow:0 0 1px #555;line-height:13px;font-size:11px">Messages</div>
</body></html>
